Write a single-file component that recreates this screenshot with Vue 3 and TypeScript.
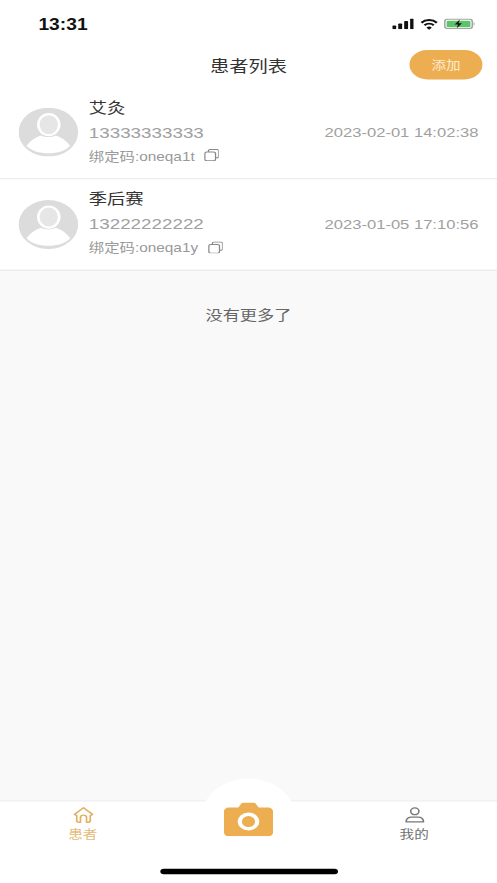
<script setup lang="ts">
interface Patient {
  name: string
  phone: string
  code: string
  time: string
}

const patients: Patient[] = [
  { name: '艾灸', phone: '13333333333', code: 'oneqa1t', time: '2023-02-01 14:02:38' },
  { name: '季后赛', phone: '13222222222', code: 'oneqa1y', time: '2023-01-05 17:10:56' },
]
</script>

<template>
  <div class="stage">
    <div class="screen">
      <div class="status">
        <span class="clock">13:31</span>
        <div class="status-icons">
          <svg class="sig" viewBox="0 0 17 10">
            <rect x="0" y="6.500" width="3" height="3.500" rx="0.7" fill="#111" />
            <rect x="4.600" y="4.500" width="3" height="5.500" rx="0.7" fill="#111" />
            <rect x="9.200" y="2.300" width="3" height="7.700" rx="0.7" fill="#111" />
            <rect x="13.800" y="0" width="3" height="10" rx="0.7" fill="#111" />
          </svg>
          <svg class="wifi" viewBox="0 0 14 11">
            <path d="M1 3.800a8.600 8.600 0 0 1 12 0" fill="none" stroke="#111" stroke-width="1.900" />
            <path d="M3.400 6.200a5.100 5.100 0 0 1 7.200 0" fill="none" stroke="#111" stroke-width="1.800" />
            <path d="M7 10.600 4.900 8.500a3 3 0 0 1 4.200 0z" fill="#111" />
          </svg>
          <svg class="batt" viewBox="0 0 24 10">
            <rect x="0.600" y="0.600" width="20.800" height="8.800" rx="2.400" fill="none" stroke="#a5a5a5" stroke-width="1.200" />
            <rect x="2" y="2" width="18" height="6" rx="1.200" fill="#5cc469" />
            <path d="M22.400 3.300c.9.3.9 3.100 0 3.400z" fill="#999" />
            <path d="M12 1 8 5.600h2.600L9.600 9l4-4.600H11z" fill="#111" />
          </svg>
        </div>
      </div>

      <header class="nav">
        <h1 class="title">患者列表</h1>
        <button class="add" type="button">添加</button>
      </header>

      <ul class="list">
        <li v-for="p in patients" :key="p.phone" class="row">
          <svg class="avatar" viewBox="0 0 45 45">
            <circle cx="22.500" cy="22.500" r="22.500" fill="#dcdcdc" />
            <ellipse cx="22.800" cy="15.600" rx="7.900" ry="9.700" fill="#e6e6e6" stroke="#fff" stroke-width="2" />
            <path d="M6 35c3-5 7-8 11-9.500 3 2 8 2 11 0 4 1.500 8 4.500 11 9.500-3.500 4.500-9.500 7-16.500 7S9.500 39.500 6 35z" fill="#fff" />
          </svg>
          <div class="info">
            <div class="name">{{ p.name }}</div>
            <div class="phone">{{ p.phone }}</div>
            <div class="code">
              <span>绑定码:{{ p.code }}</span>
              <svg class="copy" viewBox="0 0 12 12">
                <path d="M3.400 3V1.800c0-.7.500-1.200 1.200-1.200h5.600c.7 0 1.200.5 1.200 1.200v5.400c0 .7-.5 1.200-1.200 1.200H9" fill="none" stroke="#888" stroke-width="1" />
                <rect x="0.600" y="3" width="8.400" height="8.400" rx="1.600" fill="none" stroke="#888" stroke-width="1" />
              </svg>
            </div>
          </div>
          <div class="time">{{ p.time }}</div>
        </li>
      </ul>

      <p class="no-more">没有更多了</p>

      <nav class="tabs">
        <div class="tab active">
          <svg class="tab-icon" viewBox="0 0 16 16">
            <path d="M1.200 7.400 8 1.400l6.800 6-1.700 1.100v4.700c0 .9-.6 1.400-1.400 1.400H10.300V10.400a2.300 2.300 0 0 0-4.600 0v4.200H4.300c-.8 0-1.400-.5-1.400-1.400V8.500z" fill="none" stroke="#e3b063" stroke-width="1.300" stroke-linejoin="round" />
          </svg>
          <span>患者</span>
        </div>
        <div class="tab-spacer"></div>
        <div class="tab">
          <svg class="tab-icon" viewBox="0 0 16 16">
            <circle cx="8" cy="4.600" r="3.100" fill="none" stroke="#777" stroke-width="1.200" />
            <path d="M1.500 14.400v-.9c0-2 1.800-3.500 3.800-3.500h5.400c2 0 3.800 1.500 3.800 3.500v.9z" fill="none" stroke="#777" stroke-width="1.200" stroke-linejoin="round" />
          </svg>
          <span>我的</span>
        </div>
      </nav>

      <div class="camera-bump">
        <svg class="camera" viewBox="0 0 37 31">
          <path d="M3.500 4.500h7.300l2.200-3.300c.4-.7 1-1.200 1.800-1.200h7.400c.8 0 1.400.5 1.800 1.200l2.200 3.300h7.300c1.900 0 3.500 1.600 3.500 3.500v19.500c0 1.900-1.600 3.500-3.500 3.500h-30C1.600 31 0 29.400 0 27.500V8c0-1.900 1.600-3.500 3.500-3.500z" fill="#edae52" />
          <circle cx="18.500" cy="17.500" r="6.600" fill="#edae52" stroke="#fff" stroke-width="3.200" />
        </svg>
      </div>

      <div class="home-bar"></div>
    </div>
  </div>
</template>

<style>
html,
body {
  margin: 0;
  background: #f9f9f9;
  overflow: hidden;
}
</style>

<style scoped>
.stage {
  width: 497px;
  height: 883px;
  overflow: hidden;
}

/* The capture is an iPhone 375×812 frame stretched to the window. */
.screen {
  position: relative;
  width: 375px;
  height: 812px;
  display: flex;
  flex-direction: column;
  background: #f9f9f9;
  font-family: "Liberation Sans", "Noto Sans CJK SC", sans-serif;
  transform: scale(1.3253, 1.0874);
  transform-origin: 0 0;
}

.status {
  height: 44px;
  flex: none;
  display: flex;
  justify-content: space-between;
  align-items: center;
  padding: 0 16px 0 29px;
  background: #fff;
  box-sizing: border-box;
}

.clock {
  margin-top: 2px;
  font-size: 14.500px;
  font-weight: 700;
  color: #111;
}

.status-icons {
  display: flex;
  align-items: center;
  gap: 4.500px;
}

.sig {
  width: 16.600px;
  height: 10px;
}

.wifi {
  width: 13.600px;
  height: 11px;
}

.batt {
  width: 24px;
  height: 10px;
}

.nav {
  position: relative;
  height: 36px;
  flex: none;
  display: flex;
  align-items: center;
  justify-content: center;
  padding-bottom: 5px;
  box-sizing: border-box;
  background: #fff;
}

.title {
  margin: 0;
  font-size: 14.500px;
  font-weight: 400;
  color: #333;
}

.add {
  position: absolute;
  right: 11px;
  top: 2px;
  width: 55px;
  height: 27px;
  padding: 0 0 2px;
  border: none;
  border-radius: 14px;
  background: #edae52;
  color: #fdeccf;
  font-family: inherit;
  font-size: 11px;
}

.list {
  margin: 0;
  padding: 0;
  list-style: none;
}

.row {
  height: 84.700px;
  box-sizing: border-box;
  display: flex;
  align-items: center;
  padding: 0 14px;
  background: #fff;
  border-bottom: 1px solid #e6e6e6;
}

.avatar {
  width: 45px;
  height: 45px;
  flex: none;
}

.info {
  flex: 1;
  min-width: 0;
  margin-left: 8px;
  padding-bottom: 4.500px;
  display: flex;
  flex-direction: column;
}

.name {
  height: 23px;
  line-height: 23px;
  font-size: 13.800px;
  color: #333;
}

.phone {
  height: 23px;
  line-height: 23px;
  font-size: 14.200px;
  color: #a0a0a0;
}

.code {
  height: 18px;
  display: flex;
  align-items: center;
  font-size: 11.600px;
  color: #999;
}

.copy {
  width: 11.500px;
  height: 11.500px;
  margin-left: 7px;
}

.time {
  font-size: 12.500px;
  color: #a0a0a0;
}

.no-more {
  margin: 32.300px 0 0;
  text-align: center;
  font-size: 13px;
  line-height: 16px;
  color: #666;
}

.tabs {
  position: absolute;
  left: 0;
  right: 0;
  bottom: 0;
  height: 76.500px;
  box-sizing: border-box;
  display: flex;
  background: #fff;
  border-top: 1px solid #ececec;
}

.tab,
.tab-spacer {
  flex: 1;
}

.tab {
  display: flex;
  flex-direction: column;
  align-items: center;
  padding-top: 4px;
  font-size: 11px;
  line-height: 14px;
  color: #707070;
}

.tab.active {
  color: #e6bb7a;
}

.tab-icon {
  width: 16px;
  height: 17px;
  margin-bottom: 3px;
}

.camera-bump {
  position: absolute;
  left: 152px;
  top: 715.500px;
  width: 71px;
  height: 71px;
  border-radius: 50%;
  background: #fff;
  display: flex;
  justify-content: center;
  padding-top: 22px;
  box-sizing: border-box;
}

.camera {
  width: 37px;
  height: 31px;
}

.home-bar {
  position: absolute;
  left: 120.500px;
  bottom: 8px;
  width: 134px;
  height: 5px;
  border-radius: 3px;
  background: #000;
}
</style>
